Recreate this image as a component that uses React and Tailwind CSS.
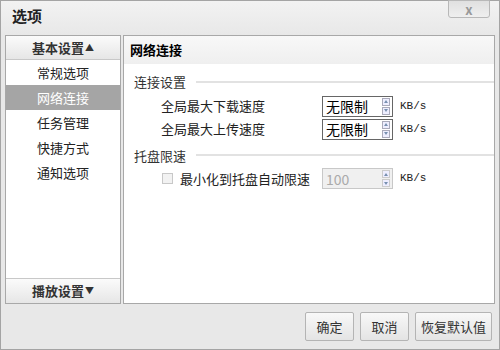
import React from 'react';

const font = { fontFamily: '"Noto Sans CJK SC", "DejaVu Sans", sans-serif' };

const NavItem = ({ label, active }) => (
  <div
    className={`h-[25px] flex items-center justify-center text-[13px] ${
      active ? 'bg-[#a5a5a5] text-white' : 'text-[#222]'
    }`}
  >
    {label}
  </div>
);

const Spinner = ({ disabled }) => (
  <div className="flex flex-col gap-[1px] mr-[2px]">
    <div className={`w-[8px] h-[8px] border ${disabled ? 'border-[#ccc]' : 'border-[#aab]'} bg-[#eef] flex items-center justify-center`}>
      <div className="w-0 h-0 border-l-[2px] border-r-[2px] border-b-[3px] border-l-transparent border-r-transparent border-b-[#7890b0]" />
    </div>
    <div className={`w-[8px] h-[8px] border ${disabled ? 'border-[#ccc]' : 'border-[#aab]'} bg-[#eef] flex items-center justify-center`}>
      <div className="w-0 h-0 border-l-[2px] border-r-[2px] border-t-[3px] border-l-transparent border-r-transparent border-t-[#7890b0]" />
    </div>
  </div>
);

const SpeedInput = ({ value, disabled }) => (
  <div className="flex items-center">
    <div
      className={`w-[71px] h-[21px] flex items-center justify-between ${
        disabled ? 'border border-[#c8c8c8] bg-[#f0f0f0] text-[#aaa]' : 'border border-[#666] bg-white text-black'
      }`}
    >
      <span className="pl-[3px] text-[14px] leading-none">{value}</span>
      <Spinner disabled={disabled} />
    </div>
    <span className="ml-[7px] text-[11px] text-[#222]" style={{ fontFamily: '"Liberation Mono", monospace' }}>KB/s</span>
  </div>
);

const Section = ({ title }) => (
  <div className="flex items-center pl-[10px] pr-0">
    <span className="text-[13px] text-[#333]">{title}</span>
    <div className="flex-1 ml-[10px] h-[2px] bg-[#e2e2e2]" />
  </div>
);

const Button = ({ label, w }) => (
  <button
    className={`${w} h-[29px] border border-[#b4b4b4] rounded-[2px] bg-gradient-to-b from-[#f8f8f8] to-[#e4e4e4] text-[13px] text-[#333]`}
  >
    {label}
  </button>
);

export default function App() {
  return (
    <div className="w-[500px] h-[350px] bg-[#e8e8e8] border border-[#a4a4a4] flex flex-col relative text-[#222]" style={font}>
      <div className="h-[34px] flex items-center pl-[11px] bg-gradient-to-b from-[#f2f2f2] to-[#e8e8e8]">
        <span className="text-[15px] text-[#222] font-bold -mt-[3px]">选项</span>
      </div>
      <div className="absolute top-[-1px] right-[9px] w-[42px] h-[18px] border border-[#b8b8b8] rounded-b-[3px] bg-gradient-to-b from-[#e0e0e0] to-[#efefef] flex items-center justify-center text-[#999] text-[13px] font-bold leading-none">
        x
      </div>

      <div className="flex h-[269px] px-[4px] gap-[2px]">
        <div className="w-[116px] border border-[#a8a8a8] bg-white flex flex-col">
          <div className="h-[24px] flex items-center justify-center bg-gradient-to-b from-[#fbfbfb] to-[#e6e6e6] border-b border-[#c8c8c8] text-[13px] font-bold text-[#333]">
            基本设置<span className="text-[9px] ml-[1px]">▲</span>
          </div>
          <NavItem label="常规选项" />
          <NavItem label="网络连接" active />
          <NavItem label="任务管理" />
          <NavItem label="快捷方式" />
          <NavItem label="通知选项" />
          <div className="flex-1" />
          <div className="h-[25px] flex items-center justify-center bg-gradient-to-b from-[#fbfbfb] to-[#e6e6e6] border-t border-[#c8c8c8] text-[13px] font-bold text-[#333]">
            播放设置<span className="text-[9px] ml-[1px]">▼</span>
          </div>
        </div>

        <div className="flex-1 border border-[#a8a8a8] bg-white flex flex-col">
          <div className="h-[28px] flex items-center pl-[6px] bg-gradient-to-b from-[#f8f8f8] to-[#efefef] text-[13px] font-bold text-black">
            网络连接
          </div>
          <div className="pt-[8px]">
            <Section title="连接设置" />
            <div className="flex flex-col gap-[2px] mt-[4px]">
              <div className="flex items-center h-[21px]">
                <span className="w-[198px] pl-[37px] text-[13px]">全局最大下载速度</span>
                <SpeedInput value="无限制" />
              </div>
              <div className="flex items-center h-[21px]">
                <span className="w-[198px] pl-[37px] text-[13px]">全局最大上传速度</span>
                <SpeedInput value="无限制" />
              </div>
            </div>
            <div className="mt-[6px]">
              <Section title="托盘限速" />
            </div>
            <div className="flex items-center h-[21px] mt-[3px]">
              <div className="w-[198px] pl-[38px] flex items-center">
                <div className="w-[11px] h-[11px] border border-[#c8c8c8] bg-[#f2f2f2]" />
                <span className="ml-[7px] text-[13px]">最小化到托盘自动限速</span>
              </div>
              <SpeedInput value="100" disabled />
            </div>
          </div>
        </div>
      </div>

      <div className="flex-1 flex items-center justify-end gap-[6px] pr-[7px]">
        <Button label="确定" w="w-[49px]" />
        <Button label="取消" w="w-[49px]" />
        <Button label="恢复默认值" w="w-[77px]" />
      </div>
    </div>
  );
}
